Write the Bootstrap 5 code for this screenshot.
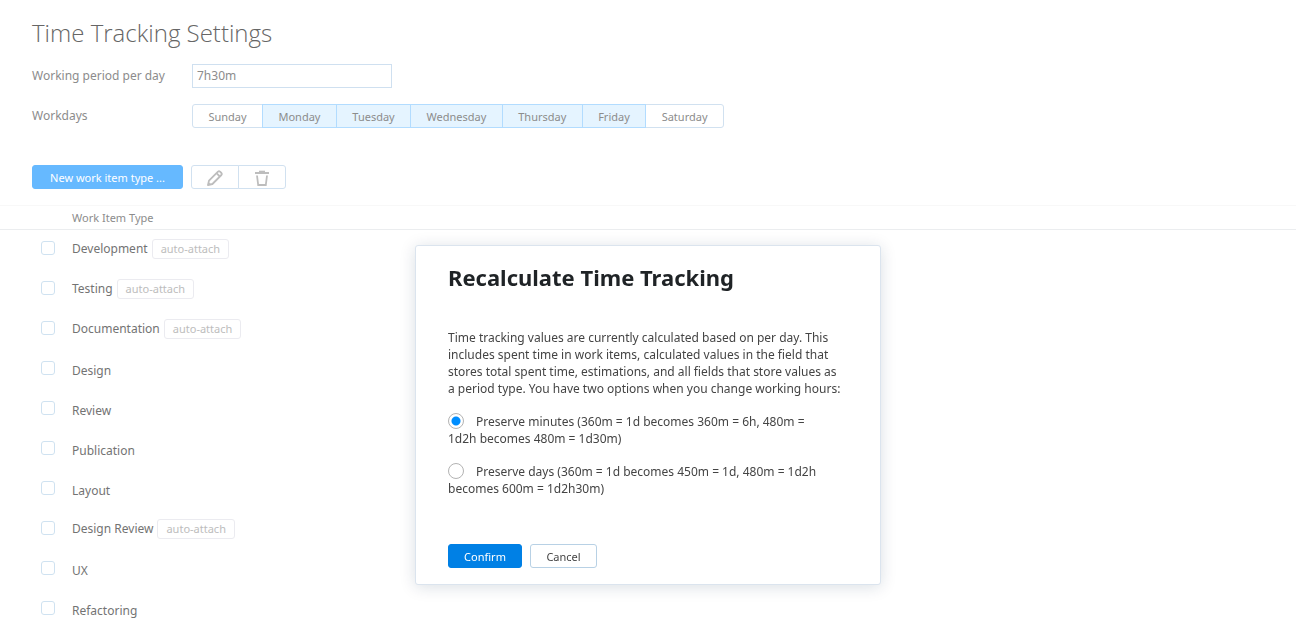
<!DOCTYPE html>
<html lang="en">
<head>
<meta charset="utf-8">
<meta name="viewport" content="width=device-width, initial-scale=1">
<title>Time Tracking Settings</title>
<link href="https://cdn.jsdelivr.net/npm/bootstrap@5.3.0/dist/css/bootstrap.min.css" rel="stylesheet">
<style>
  body { font-family: "Noto Sans", "Open Sans", sans-serif; font-size: 12px; line-height: 16px; color: #8c8c8c; background: #fff; overflow-x: hidden; }
  .page-title { font-family: "Open Sans", sans-serif; font-size: 24px; line-height: 28px; font-weight: 300; color: #666; margin-bottom: 17px; }
  .settings { padding: 19px 32px 0; }
  .field-name { width: 160px; }
  .period-input { width: 200px; height: 24px; padding: 0 4px 2px; font-size: 12px; line-height: 16px; color: #8c8c8c; border: 1px solid #cfe0f0; border-radius: 0; }
  .btn { font-size: 11px; line-height: 16px; padding: 4px 0 2px; height: 24px; border-radius: 3px; }
  .day-btn, .tool-btn { --bs-btn-color: #8c8c8c; --bs-btn-border-color: #d1e1f0; --bs-btn-bg: #fff; }
  .day-btn { --bs-btn-active-color: #8c8c8c; --bs-btn-active-bg: #e5f4ff; --bs-btn-active-border-color: #b2dcff; }
  .btn-check:checked + .day-btn { z-index: 2; }
  .week { width: 532px; }
  .tool-btn { width: 48px; --bs-btn-color: #bdbdbd; }
  .tool-btn svg { display: block; margin: 0 auto; }
  .new-btn { --bs-btn-color: #fff; --bs-btn-bg: #66b9ff; --bs-btn-border-color: #66b9ff; width: 151px; }
  .toolbar-row { margin-top: 37px; }
  .types { width: 100%; margin-top: 16px; }
  .types th { height: 24px; padding: 0; font-size: 11px; font-weight: 400; border-top: 1px solid #f8f8f8; border-bottom: 1px solid #ebedef; }
  .types td { height: 40px; padding: 2px 0 0; vertical-align: middle; color: #737373; }
  .types td.pick { width: 72px; padding: 11px 0 0 41px; vertical-align: top; }
  .types td.tagged { padding: 0 0 2px; }
  .types .form-check-input { display: block; width: 14px; height: 14px; margin: 0; border: 1px solid #cfe2f1; border-radius: 3px; }
  .auto-tag { display: inline-block; height: 20px; padding: 1px 8px; margin-left: 4px; font-size: 11px; color: #bdbdbd; border: 1px solid #ebebf0; border-radius: 3px; }
  .modal { pointer-events: none; }
  .modal-dialog { max-width: 466px; margin: 245px auto 0; }
  .modal-content { border: 1px solid #dbe4ee; border-radius: 3px; padding: 15px 32px 16px; color: #444; box-shadow: 0 2px 16px rgba(0, 42, 76, .15); }
  .modal-title { font-size: 22px; line-height: 32px; font-weight: 700; color: #1f2326; }
  .modal-body { padding: 36px 0 0; line-height: 17px; }
  .modal-body p { margin-bottom: 16px; }
  .option { display: block; margin-bottom: 16px; padding-right: 12px; }
  .option .form-check-input { float: none; width: 16px; height: 16px; margin: 0 12px 0 0; vertical-align: -3px; border: 1px solid #b3b3b3; }
  .option .form-check-input:checked { background: radial-gradient(circle, #008eff 4px, #fff 5px); }
  .modal-footer { padding: 31px 0 0; border: 0; justify-content: flex-start; gap: 8px; }
  .modal-footer > * { margin: 0; }
  .confirm-btn { --bs-btn-color: #fff; --bs-btn-bg: #0080e5; --bs-btn-border-color: #0080e5; width: 74px; }
  .cancel-btn { --bs-btn-color: #444; --bs-btn-bg: #fff; --bs-btn-border-color: #b8d1e5; width: 67px; }
</style>
</head>
<body>
<main>
  <div class="settings">
    <h1 class="page-title">Time Tracking Settings</h1>
    <div class="d-flex align-items-center mb-3">
      <label class="field-name" for="period">Working period per day</label>
      <input class="form-control period-input" id="period" type="text" value="7h30m">
    </div>
    <div class="d-flex align-items-center">
      <span class="field-name" id="workdays">Workdays</span>
      <div class="btn-group week" role="group" aria-labelledby="workdays">
        <input type="checkbox" class="btn-check" id="sun"><label class="btn day-btn" for="sun">Sunday</label>
        <input type="checkbox" class="btn-check" id="mon" checked><label class="btn day-btn" for="mon">Monday</label>
        <input type="checkbox" class="btn-check" id="tue" checked><label class="btn day-btn" for="tue">Tuesday</label>
        <input type="checkbox" class="btn-check" id="wed" checked><label class="btn day-btn" for="wed">Wednesday</label>
        <input type="checkbox" class="btn-check" id="thu" checked><label class="btn day-btn" for="thu">Thursday</label>
        <input type="checkbox" class="btn-check" id="fri" checked><label class="btn day-btn" for="fri">Friday</label>
        <input type="checkbox" class="btn-check" id="sat"><label class="btn day-btn" for="sat">Saturday</label>
      </div>
    </div>
    <div class="d-flex gap-2 toolbar-row">
      <button type="button" class="btn new-btn">New work item type ...</button>
      <div class="btn-group" role="group" aria-label="Edit work item types">
        <button type="button" class="btn tool-btn" aria-label="Edit">
          <svg width="16" height="16" viewBox="0 0 16 16" fill="none" stroke="currentColor" stroke-width="1.8" stroke-linejoin="round"><path d="M1 15 2 10.600 11 1.600Q12 .8 13 1.600L14.400 3Q15.200 4 14.400 5L5.400 14Z"/><path d="M9.500 3.200 12.800 6.500"/><path d="M.6 15.400 1.400 12 4 14.600Z" fill="currentColor" stroke="none"/></svg>
        </button>
        <button type="button" class="btn tool-btn" aria-label="Delete">
          <svg width="16" height="16" viewBox="0 0 16 16" fill="none" stroke="currentColor" stroke-width="1.800"><path d="M1 3H15" stroke-width="2"/><path d="M5 1.400H11" stroke-width="1.400"/><path d="M3 5.500 4.200 15H11.800L13 5.500"/></svg>
        </button>
      </div>
    </div>
  </div>

  <table class="types">
    <thead><tr><th></th><th scope="col">Work Item Type</th></tr></thead>
    <tbody>
      <tr><td class="pick"><input class="form-check-input" type="checkbox" id="t1"></td><td class="tagged"><label for="t1">Development</label><span class="auto-tag">auto-attach</span></td></tr>
      <tr><td class="pick"><input class="form-check-input" type="checkbox" id="t2"></td><td class="tagged"><label for="t2">Testing</label><span class="auto-tag">auto-attach</span></td></tr>
      <tr><td class="pick"><input class="form-check-input" type="checkbox" id="t3"></td><td class="tagged"><label for="t3">Documentation</label><span class="auto-tag">auto-attach</span></td></tr>
      <tr><td class="pick"><input class="form-check-input" type="checkbox" id="t4"></td><td><label for="t4">Design</label></td></tr>
      <tr><td class="pick"><input class="form-check-input" type="checkbox" id="t5"></td><td><label for="t5">Review</label></td></tr>
      <tr><td class="pick"><input class="form-check-input" type="checkbox" id="t6"></td><td><label for="t6">Publication</label></td></tr>
      <tr><td class="pick"><input class="form-check-input" type="checkbox" id="t7"></td><td><label for="t7">Layout</label></td></tr>
      <tr><td class="pick"><input class="form-check-input" type="checkbox" id="t8"></td><td class="tagged"><label for="t8">Design Review</label><span class="auto-tag">auto-attach</span></td></tr>
      <tr><td class="pick"><input class="form-check-input" type="checkbox" id="t9"></td><td><label for="t9">UX</label></td></tr>
      <tr><td class="pick"><input class="form-check-input" type="checkbox" id="t10"></td><td><label for="t10">Refactoring</label></td></tr>
    </tbody>
  </table>
</main>

<div class="modal show d-block" role="dialog" aria-labelledby="dialog-title">
  <div class="modal-dialog">
    <div class="modal-content">
      <h2 class="modal-title" id="dialog-title">Recalculate Time Tracking</h2>
      <div class="modal-body">
        <p>Time tracking values are currently calculated based on per day. This includes spent time in work items, calculated values in the field that stores total spent time, estimations, and all fields that store values as a&nbsp;period type. You have two options when you change working hours:</p>
        <label class="option"><input class="form-check-input" type="radio" name="mode" checked>Preserve minutes (360m = 1d becomes 360m = 6h, 480m = 1d2h becomes 480m = 1d30m)</label>
        <label class="option"><input class="form-check-input" type="radio" name="mode">Preserve days (360m = 1d becomes 450m = 1d, 480m = 1d2h becomes 600m = 1d2h30m)</label>
      </div>
      <div class="modal-footer">
        <button type="button" class="btn confirm-btn">Confirm</button>
        <button type="button" class="btn cancel-btn">Cancel</button>
      </div>
    </div>
  </div>
</div>
<script src="https://cdn.jsdelivr.net/npm/bootstrap@5.3.0/dist/js/bootstrap.bundle.min.js"></script>
</body>
</html>
